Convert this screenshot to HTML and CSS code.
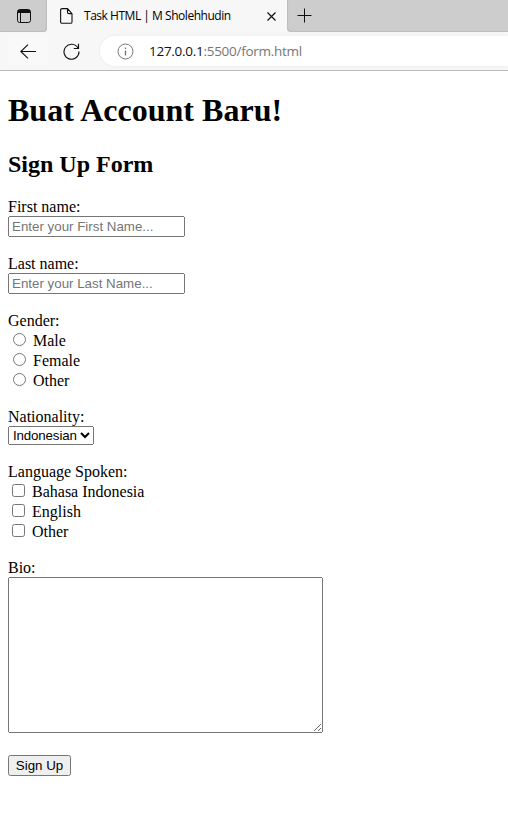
FILE: index.html
```html
<!DOCTYPE html>
<html lang="id">
<head>
<meta charset="utf-8">
<title>Task HTML | M Sholehhudin</title>
<link rel="stylesheet" href="styles.css">
</head>
<body>
<header class="browser">
  <div class="tabs">
    <div class="tab-actions">
      <svg width="16" height="16" viewBox="0 0 16 16" fill="none" stroke="#111"><rect x="1.5" y="1.5" width="13" height="13" rx="2.2"/><path d="M2 2.5h12M2 3.5h12M2 4.5h12M4.5 5v9"/></svg>
    </div>
    <div class="tab">
      <svg class="page-icon" width="14" height="16" viewBox="0 0 14 16" fill="none" stroke="#111" stroke-width="1.1"><path d="M2 .6h5.500l4.500 5v8.300a1.400 1.400 0 0 1-1.400 1.400H2A1.400 1.400 0 0 1 .6 13.900V2A1.400 1.400 0 0 1 2 .6zM7.500.8v3.500a1.300 1.300 0 0 0 1.300 1.300H12"/></svg>
      <span class="tab-title">Task HTML | M Sholehhudin</span>
      <svg class="close" width="9" height="9" viewBox="0 0 9 9" stroke="#111" stroke-width="1.15"><path d="M.5.5l8 8M8.500.5l-8 8"/></svg>
    </div>
    <div class="strip">
      <svg width="15" height="15" viewBox="0 0 15 15" stroke="#111"><path d="M.5 7.500h14M7.500.5v14"/></svg>
    </div>
  </div>
  <div class="toolbar">
    <div class="back"><svg width="17" height="15" viewBox="0 0 17 15" fill="none" stroke="#111" stroke-width="1.1"><path d="M16 7.500H1M8 .7L.8 7.500l7.200 6.800"/></svg></div>
    <svg class="reload" width="17" height="17" viewBox="0 0 17 17" fill="none" stroke="#111" stroke-width="1.15"><path d="M15 5A7.500 7.500 0 1 0 16 8.500M15.500.8v4.700h-4.700"/></svg>
    <div class="address">
      <svg width="17" height="17" viewBox="0 0 17 17" fill="none" stroke="#777"><circle cx="8.500" cy="8.500" r="7.500"/><path d="M8.500 7.500v5M8.500 4.500v1.500" stroke-width="1.400"/></svg>
      <span class="url"><b>127.0.0.1</b>:5500/form.html</span>
    </div>
  </div>
</header>
<main>
  <h1>Buat Account Baru!</h1>
  <h2>Sign Up Form</h2>
  <form>
    <div class="field"><label for="first">First name:</label><input class="text" id="first" type="text" placeholder="Enter your First Name..."></div>
    <div class="field"><label for="last">Last name:</label><input class="text" id="last" type="text" placeholder="Enter your Last Name..."></div>
    <div class="field">
      <span class="legend">Gender:</span>
      <label class="option"><input type="radio" name="gender">Male</label>
      <label class="option"><input type="radio" name="gender">Female</label>
      <label class="option"><input type="radio" name="gender">Other</label>
    </div>
    <div class="field"><label for="nation">Nationality:</label><select id="nation"><option>Indonesian</option></select></div>
    <div class="field">
      <span class="legend">Language Spoken:</span>
      <label class="option check"><input type="checkbox">Bahasa Indonesia</label>
      <label class="option check"><input type="checkbox">English</label>
      <label class="option check"><input type="checkbox">Other</label>
    </div>
    <div class="field bio"><label for="bio">Bio:</label><textarea id="bio"></textarea></div>
    <button type="button">Sign Up</button>
  </form>
</main>
</body>
</html>
```
FILE: styles.css
```css
* { box-sizing: border-box; }
body { margin: 0; background: #fff; color: #000; font: 16px/18px "Liberation Serif", serif; overflow: hidden; }
svg { display: block; flex: none; }

.browser { height: 71px; background: #f7f7f7; border-bottom: 1px solid #bababa; font-family: "Open Sans", "Noto Sans", sans-serif; }
.tabs { display: flex; height: 32px; }
.tab-actions { width: 47px; padding: 8px 0 0 16px; background: #cdcdcd; border-radius: 0 0 4px 0; box-shadow: inset -1px -1px 1px #bdbdbd; }
.tab { display: flex; align-items: center; width: 240px; padding-left: 13px; }
.tab-title { width: 147px; margin-left: 10px; font-size: 12px; letter-spacing: -0.47px; white-space: nowrap; }
.close { margin-left: 36px; }
.strip { flex: 1; padding: 8px 0 0 10px; background: #cdcdcd; border-radius: 0 0 0 4px; box-shadow: inset 1px -1px 1px #bdbdbd; }
.toolbar { display: flex; align-items: center; height: 38px; }
.back { display: flex; align-items: center; justify-content: center; width: 40px; height: 30px; margin-left: 8px; background: #f9f9f9; }
.reload { margin-left: 15px; }
.address { display: flex; align-items: center; flex: 1; height: 30px; margin-left: 20px; padding-left: 17px; background: #fff; border-radius: 15px 0 0 15px; box-shadow: 0 0 3px #e6e6e6; }
.url { margin-left: 15px; color: #767676; font-size: 13.5px; letter-spacing: -0.28px; }
.url b { color: #111; font-weight: 400; }

main { padding: 21px 8px 0; }
h1 { margin: 0; font-size: 32px; line-height: 37px; letter-spacing: 0.02px; }
h2 { margin: 22px 0 20px; font-size: 24px; line-height: 27px; }
.field { display: flex; flex-direction: column; align-items: flex-start; margin-bottom: 18px; }
input, select, textarea, button { margin: 0; font-family: "Liberation Sans", Arial, sans-serif; font-size: 13.333px; }
.text { width: 177px; height: 21px; }
.option { display: flex; height: 20px; line-height: 22px; }
.option input { width: 13px; height: 13px; margin: 3px 7px 0 5px; }
.check input { margin-left: 4px; }
select { width: 86px; height: 19px; letter-spacing: -0.15px; }
textarea { width: 315px; height: 156px; }
.bio { margin-bottom: 22px; }
button { display: block; width: 63px; height: 21px; padding: 0; }
```
